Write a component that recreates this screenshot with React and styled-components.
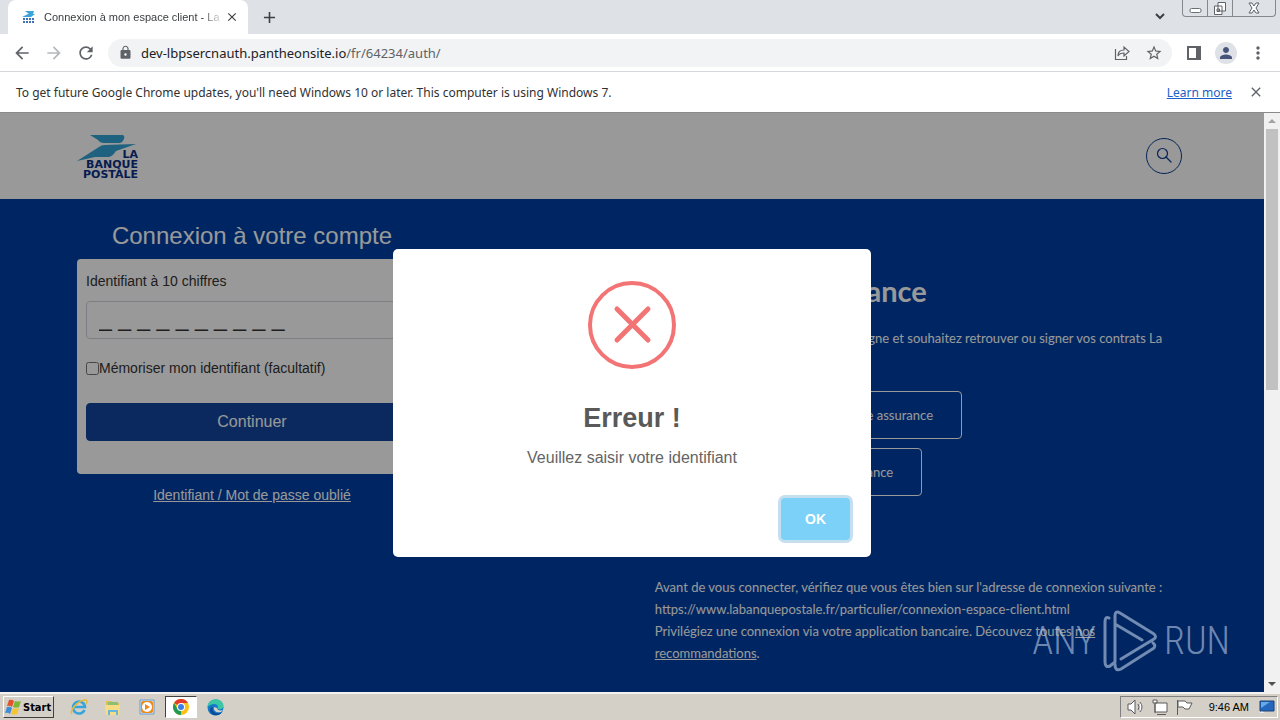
import React, { useState } from 'react';
import styled, { createGlobalStyle } from 'styled-components';
import { MdStarBorder, MdPerson, MdMoreVert, MdLock, MdRefresh, MdArrowBack, MdArrowForward, MdClose, MdAdd } from 'react-icons/md';

const uiFont = '"Noto Sans", "Open Sans", sans-serif';
const formFont = '"Liberation Sans", Arial, sans-serif';
const bankFont = 'Lato, "Open Sans", sans-serif';

const GlobalStyle = createGlobalStyle`
  * {
    box-sizing: border-box;
  }
  body {
    margin: 0;
    font-family: ${formFont};
  }
  button, input {
    font-family: inherit;
  }
  h1, h2, p {
    margin: 0;
    font-weight: normal;
  }
  svg {
    display: block;
    flex: none;
  }
`;

const Screen = styled.div`
  display: flex;
  flex-direction: column;
  height: 100vh;
  overflow: hidden;
`;

/* browser */

const TabStrip = styled.div`
  display: flex;
  height: 34px;
  padding-left: 8px;
  background: #dee1e6;
`;

const Tab = styled.div`
  display: flex;
  align-items: center;
  width: 240px;
  margin-right: 4px;
  padding: 0 8px 0 14px;
  background: #fff;
  border-radius: 8px 8px 0 0;
`;

const TabTitle = styled.span`
  flex: 1;
  margin-left: 8px;
  overflow: hidden;
  white-space: nowrap;
  color: #3c4043;
  font: 11px/16px ${formFont};
  mask-image: linear-gradient(to right, #000 88%, transparent);
`;

const IconButton = styled.button`
  display: grid;
  place-items: center;
  width: ${(props) => props.$size || 32}px;
  height: ${(props) => props.$size || 32}px;
  flex: none;
  padding: 0;
  border: 0;
  border-radius: 50%;
  background: ${(props) => props.$bg || 'none'};
  color: ${(props) => props.$color || '#5f6368'};
`;

const TabStripEnd = styled.div`
  display: flex;
  gap: 6px;
  margin-left: auto;
  padding-right: 4px;
`;

const WindowControls = styled.div`
  display: flex;
  height: 17px;
  border: 1px solid #85898f;
  border-top: 0;
  border-radius: 0 0 4px 4px;
`;

const WindowButton = styled.button`
  display: grid;
  place-items: center;
  width: ${(props) => props.$width}px;
  padding: 0;
  border: 0;
  border-right: ${(props) => (props.$last ? 0 : '1px solid #85898f')};
  background: none;
`;

const Toolbar = styled.div`
  display: flex;
  align-items: center;
  height: 38px;
  padding: 0 6px;
  background: #fff;
  border-bottom: 1px solid #d5d7da;
`;

const AddressBar = styled.div`
  display: flex;
  align-items: center;
  flex: 1;
  height: 28px;
  margin: 0 6px;
  padding: 0 2px 0 10px;
  border-radius: 14px;
  background: #f1f3f4;
`;

const Url = styled.span`
  flex: 1;
  margin-left: 8px;
  color: #5f6368;
  font: 13px ${uiFont};

  b {
    color: #202124;
    font-weight: normal;
  }
`;

const ProfileButton = styled(IconButton)`
  margin: 0 5px;
`;

const InfoBar = styled.div`
  display: flex;
  align-items: center;
  height: 41px;
  padding: 0 8px 0 16px;
  background: #fff;
  border-bottom: 1px solid #8a8a8a;
  color: #303134;
  font: 12px ${uiFont};

  a {
    margin-left: auto;
    margin-right: 8px;
    color: #1a60c8;
  }
`;

const Viewport = styled.div`
  display: flex;
  flex: 1;
  min-height: 0;
`;

const ScrollTrack = styled.div`
  display: flex;
  flex-direction: column;
  align-items: center;
  width: 16px;
  background: #f1f1f1;
`;

const ScrollArrow = styled.button`
  display: grid;
  place-items: center;
  width: 16px;
  height: 16px;
  padding: 0;
  border: 0;
  background: none;
`;

const ScrollThumb = styled.div`
  width: 12px;
  height: 45%;
  margin-bottom: auto;
  background: #c1c1c1;
`;

/* page */

const Page = styled.div`
  position: relative;
  flex: 1;
  background: #003fa5;
  overflow: hidden;
`;

const Header = styled.header`
  display: flex;
  align-items: center;
  justify-content: space-between;
  height: 86px;
  padding: 0 82px 0 77px;
  background: #fff;
`;

const SearchButton = styled.button`
  display: grid;
  place-items: center;
  width: 36px;
  height: 36px;
  padding: 0;
  border: 1px solid #0b3c8f;
  border-radius: 50%;
  background: none;
  color: #0b3c8f;
`;

const Columns = styled.main`
  display: grid;
  grid-template-columns: 52% 1fr;
  padding: 0 76px 0 77px;
`;

const LoginColumn = styled.section`
  width: 350px;
  padding-top: 22px;
  text-align: center;
`;

const LoginTitle = styled.h1`
  height: 38px;
  color: #fff;
  font-size: 24px;
  line-height: 30px;
`;

const LoginCard = styled.form`
  display: flex;
  flex-direction: column;
  height: 215px;
  padding: 12px 9px;
  border-radius: 4px;
  background: #fff;
  color: #333;
  font-size: 14px;
  line-height: 20px;
  text-align: left;
`;

const IdentifierInput = styled.input`
  height: 38px;
  margin: 10px 0 19px;
  padding: 4px 12px 8px;
  border: 1px solid #ced4da;
  border-radius: 4px;
  background: #fff;
  color: #333;
  font-size: 23px;

  &::placeholder {
    color: #333;
    opacity: 1;
  }
`;

const Remember = styled.label`
  display: flex;
  align-items: center;

  input {
    width: 13px;
    height: 13px;
    margin: 0;
  }
`;

const ContinueButton = styled.button`
  height: 38px;
  margin-top: 25px;
  border: 1px solid #10459c;
  border-radius: 4px;
  background: #13459e;
  color: #fff;
  font-size: 16px;
`;

const ForgotLink = styled.a`
  display: block;
  margin-top: 11px;
  color: #fff;
  font-size: 14px;
  line-height: 20px;
`;

const InsuranceColumn = styled.section`
  padding-top: 76px;
  color: #fff;
  font-family: ${bankFont};
  font-size: 13px;
  line-height: 22px;
`;

const InsuranceTitle = styled.h2`
  margin-bottom: 20px;
  font-size: 29px;
  font-weight: bold;
  line-height: 32px;
`;

const OutlineLink = styled.a`
  display: flex;
  align-items: center;
  width: fit-content;
  height: 48px;
  margin-bottom: 9px;
  padding: 0 28px;
  border: 1px solid #fff;
  border-radius: 4px;
  color: #fff;
  text-decoration: none;
`;

const InsuranceLinks = styled.div`
  margin: 20px 0 80px;
`;

const Notice = styled.p`
  a {
    color: #fff;
  }
`;

/* dialog */

const Overlay = styled.div`
  position: absolute;
  inset: 0;
  display: grid;
  place-items: center;
  background: rgba(0, 0, 0, 0.4);
`;

const Dialog = styled.div`
  display: flex;
  flex-direction: column;
  align-items: center;
  width: 478px;
  padding: 32px 18px 14px;
  border-radius: 5px;
  background: #fff;
`;

const DialogTitle = styled.h2`
  margin-top: 32px;
  color: #595959;
  font-size: 27px;
  font-weight: bold;
  line-height: 34px;
`;

const DialogText = styled.p`
  margin: 13px 0 27px;
  color: #646464;
  font-size: 16px;
  line-height: 20px;
`;

const DialogButton = styled.button`
  align-self: flex-end;
  width: 75px;
  height: 48px;
  border: 3px solid #c5dfee;
  border-radius: 7px;
  background: #7cd1f9;
  color: #fff;
  font-size: 14px;
  font-weight: bold;
`;

const Watermark = styled.div`
  position: absolute;
  right: 34px;
  bottom: 20px;
  display: flex;
  align-items: center;
  gap: 7px;
  color: rgba(184, 202, 228, 0.62);
  font: 300 38px/62px "Roboto Condensed", "Liberation Sans Narrow", Roboto, sans-serif;
`;

/* taskbar */

const Taskbar = styled.footer`
  display: flex;
  align-items: center;
  height: 28px;
  padding: 0 2px 0 3px;
  background: #d4d0c8;
  box-shadow: inset 0 2px 0 #f4f2ee;
`;

const StartButton = styled.button`
  display: flex;
  align-items: center;
  gap: 1px;
  height: 22px;
  margin: 2px 9px 0 0;
  padding: 0 2px 0 1px;
  border: 1px solid;
  border-color: #fff #404040 #404040 #fff;
  background: #d4d0c8;
  color: #000;
  font: bold 11px "DejaVu Sans Condensed", "DejaVu Sans", sans-serif;
`;

const TaskButton = styled.button`
  display: grid;
  place-items: center;
  width: 32px;
  height: 22px;
  margin: 2px 2px 0 0;
  padding: 0;
  border: 1px solid;
  border-color: ${(props) => (props.$active ? '#404040 #fff #fff #404040' : 'transparent')};
  background: ${(props) => (props.$active ? '#fff' : 'none')};
`;

const Tray = styled.div`
  display: flex;
  align-items: center;
  gap: 8px;
  height: 22px;
  margin: 2px 0 0 auto;
  padding: 0 2px 0 6px;
  border: 1px solid;
  border-color: #808080 #fff #fff #808080;
  color: #000;
  font: 11px ${formFont};

  time {
    margin: 0 2px 0 8px;
  }
`;

const BankLogo = () => (
  <svg width="62" height="48" viewBox="0 -2 62 48" role="img" aria-label="La Banque Postale">
    <path d="M13 1h33q2 1 1 4t-4 4H27q-4 0-6-3zM0 27l22-14q2-2 6-2l31-1-20 7q-3 5-7 6l-14 0z" fill="#34a3d4" />
    <g fill="#0d2f85" fontFamily="DejaVu Sans" fontWeight="bold" fontSize="11" textAnchor="end">
      <text x="61" y="24">LA</text>
      <text x="61" y="34">BANQUE</text>
      <text x="61" y="44">POSTALE</text>
    </g>
  </svg>
);

const Favicon = () => (
  <svg width="14" height="12" viewBox="0 0 14 12">
    <path d="M3 0h9l-1 3-4 0zM0 6l6-3h7L9 6z" fill="#3ba4d8" />
    <path d="M1 8h12M1 11h12" stroke="#3f6fb4" strokeWidth="2" strokeDasharray="2 1" />
  </svg>
);

const SearchIcon = () => (
  <svg width="18" height="18" viewBox="0 0 18 18" fill="none" stroke="currentColor" strokeWidth="1.2" strokeLinecap="round">
    <circle cx="7.500" cy="6.500" r="5" />
    <path d="m11 10 5 5" />
  </svg>
);

const ShareIcon = () => (
  <svg width="16" height="16" viewBox="0 0 16 16" fill="none" stroke="currentColor" strokeWidth="1.2">
    <path d="M1.500 4v10.500h11V11M4 11c0-4 2-6 6-6V2l5 4.500-5 4.500V8c-3 0-5 1-6 3z" />
  </svg>
);

const ErrorIcon = () => (
  <svg width="88" height="88" viewBox="0 0 88 88" fill="none" stroke="#f27474">
    <circle cx="44" cy="44" r="42" strokeWidth="4" />
    <path d="M29 28l31 31M60 28 29 59" strokeWidth="5" strokeLinecap="round" />
  </svg>
);

const PlayLogo = () => (
  <svg width="54" height="62" viewBox="0 0 54 62" fill="none" stroke="currentColor" strokeWidth="3" strokeLinejoin="round" strokeLinecap="round">
    <path d="M6 8Q2 6 2 12v40q0 6 5 4l5-4V6q0-6 5-3l34 21q3 3 0 5L18 49M12 46V14l27 16M12 54q0 8 6 5l33-21q2-3-1-5" />
  </svg>
);

const WindowsIcon = () => (
  <svg width="17" height="16" viewBox="0 0 17 16">
    <path d="M4 1q3-1 5 1L7 8Q5 6 2 7z" fill="#e5532b" />
    <path d="M10 2q3 1 6 0l-2 6q-3 1-6 0z" fill="#7ab735" />
    <path d="M2 8q3-1 5 1l-2 6q-2-2-5-1z" fill="#3f8cd8" />
    <path d="M8 9q3 1 6 0l-2 6q-3 1-6 0z" fill="#f7c431" />
  </svg>
);

const ExplorerIcon = () => (
  <svg width="18" height="18" viewBox="0 0 18 18" fill="none">
    <path d="M14.500 12a6 6 0 1 1 .5-3H4" stroke="#35a5df" strokeWidth="2.600" />
    <path d="M2 16C-1 12 10 1 16 2q2 1 0 4" stroke="#e7ba3c" strokeWidth="1.500" />
  </svg>
);

const FolderIcon = () => (
  <svg width="18" height="17" viewBox="0 0 18 17">
    <path d="M2 2h6l1 2h6v11H2z" fill="#e3bd51" />
    <path d="M4 3h10v3H4z" fill="#8dbf73" />
    <path d="M1 6h15l-1 10H2z" fill="#f6dc84" />
    <path d="M4 16v-5h10v5h-2v-3H6v3z" fill="#67b6dc" />
  </svg>
);

const PlayerIcon = () => (
  <svg width="16" height="16" viewBox="0 0 16 16">
    <path d="M1 1h14v14H1z" fill="#d9e9f7" stroke="#659ccc" />
    <rect x="2" y="2" width="12" height="12" rx="2" fill="#f18a1d" />
    <circle cx="8" cy="8" r="5" fill="#fff" />
    <path d="m6 5 5 3-5 3z" fill="#f18a1d" />
  </svg>
);

const ChromeIcon = () => (
  <svg width="16" height="16" viewBox="0 0 16 16">
    <circle cx="8" cy="8" r="8" fill="#fbc116" />
    <path d="M8 8 1.070 4A8 8 0 0 1 14.930 4H8z" fill="#e33b2e" />
    <path d="M1.070 4 4.540 10 8 12l0 4A8 8 0 0 1 1.070 4z" fill="#229954" />
    <circle cx="8" cy="8" r="4" fill="#fff" />
    <circle cx="8" cy="8" r="3" fill="#3c7ee8" />
  </svg>
);

const EdgeIcon = () => (
  <svg width="17" height="17" viewBox="0 0 17 17">
    <circle cx="8.500" cy="8.500" r="8" fill="#1479c9" />
    <path d="M.5 8C1-2 16-2 16.500 7c0 4-6 4-6 2 2-4-5-6-10-1z" fill="#3bc6a5" />
    <path d="M6 8c-2 5 4 8 9 5-3 5-11 4-12-1 0-3 1-4 3-4z" fill="#0b4a94" />
    <path d="M7 8c-1 4 3 6 7 5l2-2c-3 1-6 0-6-2z" fill="#d4d0c8" />
  </svg>
);

const TrayIcons = () => (
  <svg width="66" height="18" viewBox="0 0 66 18" fill="#fff" stroke="#5b5b5b">
    <path d="M1 6h3l4-4v14l-4-4H1zM11 6q2 3 0 6M13 4q4 5 0 10" />
    <path d="M28 5h12v9H28zM30 16.500h9M26 2v3h4V2zM28 6v9" />
    <path d="M50.500 2v15M51 3h7l2 2h5l-3 6h-4l-2-2h-5z" />
  </svg>
);

const MonitorIcon = () => (
  <svg width="16" height="14" viewBox="0 0 16 14">
    <path d="M1 1h14v10H1z" fill="#2467bd" stroke="#17427e" />
    <path d="M2 2h9L2 8z" fill="#69a8e6" />
    <path d="M0 13q3-3 6 0z" fill="#e5eef8" />
  </svg>
);

const tasks = [
  { id: 1, name: 'Internet Explorer', icon: ExplorerIcon },
  { id: 2, name: 'Windows Explorer', icon: FolderIcon },
  { id: 3, name: 'Media Player', icon: PlayerIcon },
  { id: 4, name: 'Google Chrome', icon: ChromeIcon, active: true },
  { id: 5, name: 'Microsoft Edge', icon: EdgeIcon },
];

function Browser() {
  return (
    <>
      <TabStrip>
        <Tab>
          <Favicon />
          <TabTitle>Connexion à mon espace client - La Banque</TabTitle>
          <IconButton $size={16} $color="#3c4043" aria-label="Close tab"><MdClose size={14} /></IconButton>
        </Tab>
        <IconButton $size={34} $color="#3c4043" aria-label="New tab"><MdAdd size={19} /></IconButton>
        <TabStripEnd>
          <IconButton aria-label="Search tabs" $color="#3c4043">
            <svg width="12" height="8" viewBox="0 0 12 8" fill="none" stroke="currentColor" strokeWidth="2"><path d="m2 2 4 4 4-4" /></svg>
          </IconButton>
          <WindowControls>
            <WindowButton $width={25} aria-label="Minimize">
              <svg width="13" height="16" viewBox="0 0 13 16" fill="#fff" stroke="#6a6e75"><rect x="1" y="8.500" width="11" height="4" rx="1.500" /></svg>
            </WindowButton>
            <WindowButton $width={25} aria-label="Restore">
              <svg width="14" height="16" viewBox="0 0 14 16" fill="#fff" stroke="#5f636b"><path d="M5 2.500h7.500V11H5zM1.500 6H9v8.500H1.500zM4 9h2.500v2.500H4z" /></svg>
            </WindowButton>
            <WindowButton $width={42} $last aria-label="Close">
              <svg width="12" height="16" viewBox="0 0 12 16" fill="#fff" stroke="#5f636b"><path d="M1 3h3l2 3 2-3h3L8 8l3 5H8l-2-3-2 3H1l3-5z" /></svg>
            </WindowButton>
          </WindowControls>
        </TabStripEnd>
      </TabStrip>
      <Toolbar>
        <IconButton aria-label="Back"><MdArrowBack size={20} /></IconButton>
        <IconButton aria-label="Forward" $color="#b5b8bb"><MdArrowForward size={20} /></IconButton>
        <IconButton aria-label="Reload"><MdRefresh size={20} /></IconButton>
        <AddressBar>
          <MdLock size={15} color="#5f6368" />
          <Url><b>dev-lbpsercnauth.pantheonsite.io</b>/fr/64234/auth/</Url>
          <IconButton aria-label="Share"><ShareIcon /></IconButton>
          <IconButton aria-label="Bookmark"><MdStarBorder size={18} /></IconButton>
        </AddressBar>
        <IconButton aria-label="Side panel">
          <svg width="14" height="14" viewBox="0 0 14 14"><path d="M1 1h12v12H1z" fill="none" stroke="#5f6368" strokeWidth="2" /><path d="M9 1h4v12H9z" fill="#5f6368" /></svg>
        </IconButton>
        <ProfileButton $size={22} $bg="#dee1e6" $color="#47557a" aria-label="Profile"><MdPerson size={18} /></ProfileButton>
        <IconButton aria-label="Menu"><MdMoreVert size={20} /></IconButton>
      </Toolbar>
      <InfoBar>
        <span>To get future Google Chrome updates, you'll need Windows 10 or later. This computer is using Windows 7.</span>
        <a href="#learn">Learn more</a>
        <IconButton aria-label="Dismiss"><MdClose size={16} /></IconButton>
      </InfoBar>
    </>
  );
}

function App() {
  const [isOpen, setIsOpen] = useState(true);

  return (
    <>
      <GlobalStyle />
      <Screen>
        <Browser />
        <Viewport>
          <Page>
            <Header>
              <BankLogo />
              <SearchButton aria-label="Rechercher"><SearchIcon /></SearchButton>
            </Header>
            <Columns>
              <LoginColumn>
                <LoginTitle>Connexion à votre compte</LoginTitle>
                <LoginCard onSubmit={(e) => e.preventDefault()}>
                  <label htmlFor="identifier">Identifiant à 10 chiffres</label>
                  <IdentifierInput id="identifier" placeholder="_ _ _ _ _ _ _ _ _ _" />
                  <Remember><input type="checkbox" />Mémoriser mon identifiant (facultatif)</Remember>
                  <ContinueButton type="button" onClick={() => setIsOpen(true)}>Continuer</ContinueButton>
                </LoginCard>
                <ForgotLink href="#forgot">Identifiant / Mot de passe oublié</ForgotLink>
              </LoginColumn>
              <InsuranceColumn>
                <InsuranceTitle>Contrats d'Assurance</InsuranceTitle>
                <p>Vous êtes déjà clients en Banque en ligne et souhaitez retrouver ou signer vos contrats La Banque Postale Assurances ?</p>
                <InsuranceLinks>
                  <OutlineLink href="#space">Accéder à mon espace pour votre assurance</OutlineLink>
                  <OutlineLink href="#sign">Signer tous mes contrats d'assurance</OutlineLink>
                </InsuranceLinks>
                <Notice>
                  Avant de vous connecter, vérifiez que vous êtes bien sur l'adresse de connexion suivante :<br />
                  https://www.labanquepostale.fr/particulier/connexion-espace-client.html<br />
                  Privilégiez une connexion via votre application bancaire. Découvez toutes <a href="#advice">nos<br />recommandations</a>.
                </Notice>
              </InsuranceColumn>
            </Columns>
            {isOpen && (
              <Overlay>
                <Dialog role="alertdialog" aria-labelledby="dialog-title">
                  <ErrorIcon />
                  <DialogTitle id="dialog-title">Erreur !</DialogTitle>
                  <DialogText>Veuillez saisir votre identifiant</DialogText>
                  <DialogButton onClick={() => setIsOpen(false)}>OK</DialogButton>
                </Dialog>
              </Overlay>
            )}
            <Watermark>
              <span>ANY</span>
              <PlayLogo />
              <span>RUN</span>
            </Watermark>
          </Page>
          <ScrollTrack>
            <ScrollArrow aria-label="Scroll up"><svg width="8" height="4" viewBox="0 0 8 4"><path d="M0 4 4 0l4 4z" fill="#a3a3a3" /></svg></ScrollArrow>
            <ScrollThumb />
            <ScrollArrow aria-label="Scroll down"><svg width="8" height="4" viewBox="0 0 8 4"><path d="m0 0 4 4 4-4z" fill="#505050" /></svg></ScrollArrow>
          </ScrollTrack>
        </Viewport>
        <Taskbar>
          <StartButton><WindowsIcon />Start</StartButton>
          {tasks.map(({ id, name, icon: Icon, active }) => (
            <TaskButton key={id} $active={active} aria-label={name}><Icon /></TaskButton>
          ))}
          <Tray>
            <TrayIcons />
            <time>9:46 AM</time>
            <MonitorIcon />
          </Tray>
        </Taskbar>
      </Screen>
    </>
  );
}

export default App;
